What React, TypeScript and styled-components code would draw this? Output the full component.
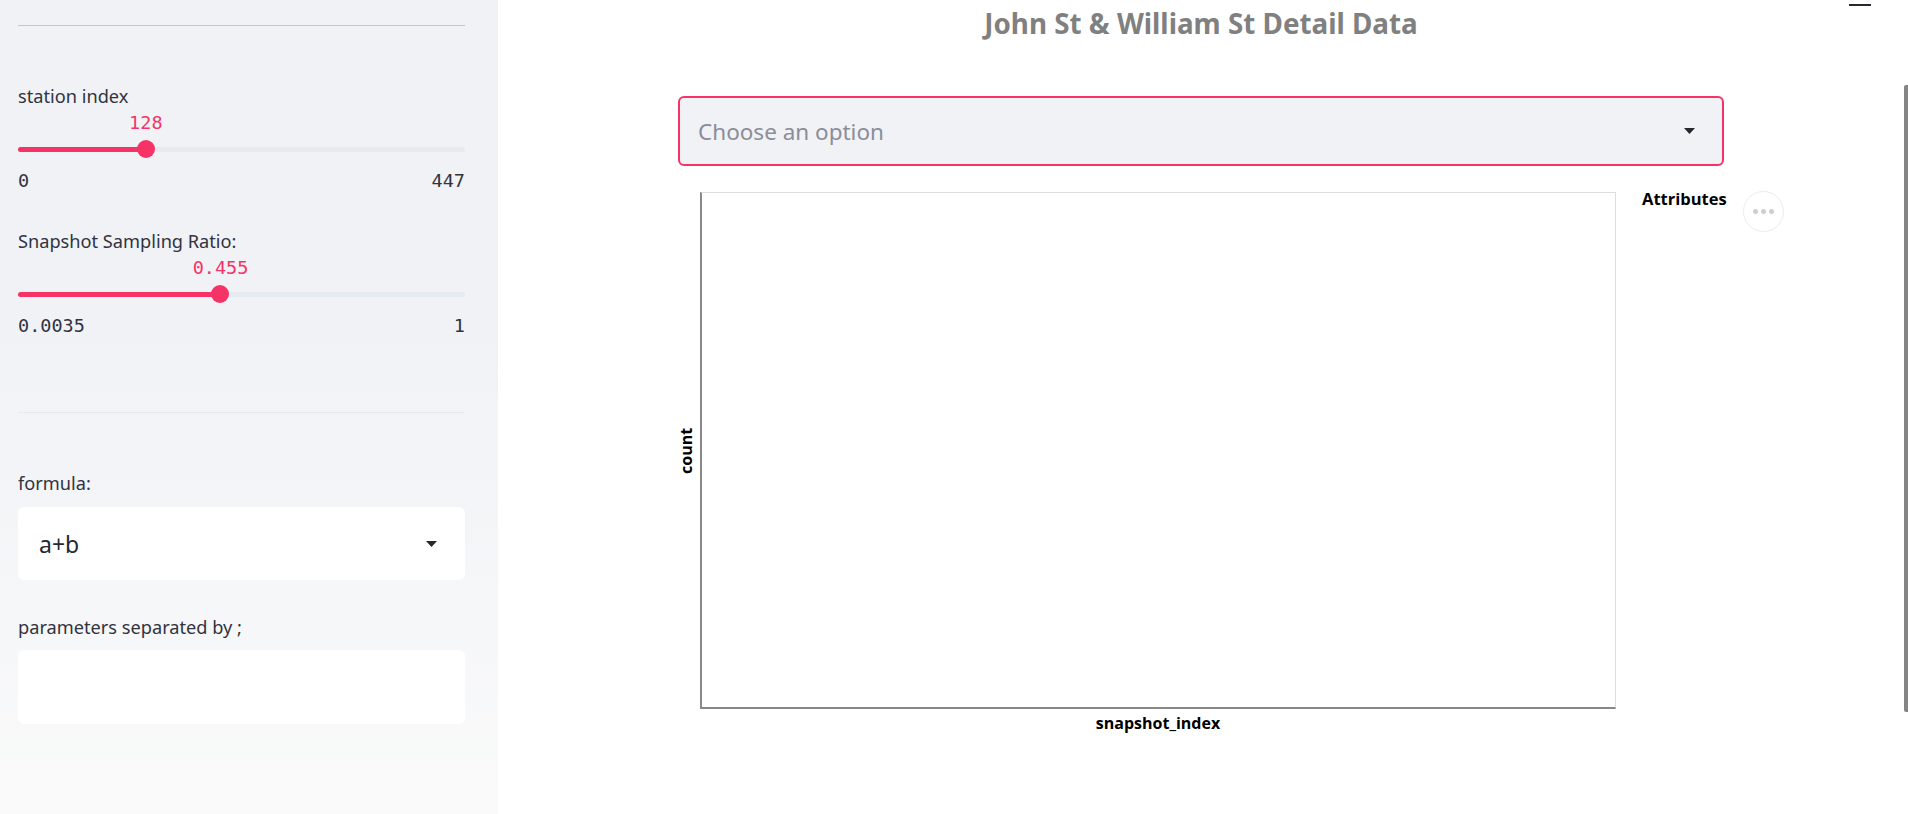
import React from "react";
import styled, { createGlobalStyle } from "styled-components";

const GlobalStyle = createGlobalStyle`
	html, body {
		margin: 0;
		padding: 0;
		height: 814px;
		overflow: hidden;
		background: #ffffff;
	}
	* {
		box-sizing: border-box;
	}
`;

const PINK = "#f63366";
const TEXT = "#31333f";

type SliderProps = {
	label: string;
	value: string;
	min: string;
	max: string;
	percent: number;
	first?: boolean;
};

const Slider = ({ label, value, min, max, percent, first }: SliderProps) => (
	<SliderBlock $first={first}>
		<Label>{label}</Label>
		<ValueRow>
			<ThumbValue style={{ left: `${percent}%` }}>{value}</ThumbValue>
		</ValueRow>
		<TrackRow>
			<Track>
				<TrackFill style={{ width: `${percent}%` }} />
				<Thumb style={{ left: `${percent}%` }} />
			</Track>
		</TrackRow>
		<MinMax>
			<span>{min}</span>
			<span>{max}</span>
		</MinMax>
	</SliderBlock>
);

const Caret = () => (
	<svg width="11" height="6" viewBox="0 0 11 6">
		<path d="M0 0 L11 0 L5.5 6 Z" fill="#262730" />
	</svg>
);

const App = () => {
	return (
		<>
			<GlobalStyle />
			<Layout>
				<Sidebar>
					<TopRule />
					<Slider label="station index" value="128" min="0" max="447" percent={28.6} first />
					<Slider label="Snapshot Sampling Ratio:" value="0.455" min="0.0035" max="1" percent={45.3} />
					<Divider />
					<FieldLabel>formula:</FieldLabel>
					<SideSelect>
						<span>a+b</span>
						<Caret />
					</SideSelect>
					<FieldLabel $gap={35}>parameters separated by ;</FieldLabel>
					<SideInput />
				</Sidebar>

				<Main>
					<MenuDash />
					<Content>
						<Title>John St &amp; William St Detail Data</Title>
						<MainSelect>
							<Placeholder>Choose an option</Placeholder>
							<Caret />
						</MainSelect>
						<ChartWrap>
							<ChartRow>
								<YTitle>count</YTitle>
								<PlotColumn>
									<Plot />
									<XTitle>snapshot_index</XTitle>
								</PlotColumn>
								<Legend>Attributes</Legend>
							</ChartRow>
							<ActionsButton>
								<Dot />
								<Dot />
								<Dot />
							</ActionsButton>
						</ChartWrap>
					</Content>
					<ScrollThumb />
				</Main>
			</Layout>
		</>
	);
};

const Layout = styled.div`
	display: flex;
	width: 1908px;
	height: 814px;
	font-family: "Noto Sans", "Open Sans", sans-serif;
	color: ${TEXT};
`;

const Sidebar = styled.aside`
	width: 498px;
	flex-shrink: 0;
	height: 814px;
	padding: 25px 33px 0 18px;
	background: linear-gradient(180deg, #f0f2f6 0%, #f0f2f6 40%, #fafafa 100%);
	display: flex;
	flex-direction: column;
`;

const TopRule = styled.div`
	height: 1px;
	background: #c4c6cc;
`;

const SliderBlock = styled.div<{ $first?: boolean }>`
	margin-top: ${(p) => (p.$first ? "58px" : "37px")};
	display: flex;
	flex-direction: column;
`;

const Label = styled.div`
	font-size: 18.2px;
	line-height: 24px;
	color: ${TEXT};
`;

const ValueRow = styled.div`
	position: relative;
	height: 22px;
	margin-top: 4px;
`;

const ThumbValue = styled.span`
	position: absolute;
	top: 0;
	transform: translateX(-50%);
	font-family: "DejaVu Sans Mono", "Liberation Mono", monospace;
	font-size: 18.5px;
	line-height: 22px;
	color: ${PINK};
	white-space: nowrap;
`;

const TrackRow = styled.div`
	height: 20px;
	margin-top: 5px;
	display: flex;
	align-items: center;
`;

const Track = styled.div`
	position: relative;
	width: 100%;
	height: 5px;
	border-radius: 3px;
	background: #e6eaf1;
`;

const TrackFill = styled.div`
	height: 100%;
	border-radius: 3px;
	background: ${PINK};
`;

const Thumb = styled.div`
	position: absolute;
	top: 50%;
	width: 18px;
	height: 18px;
	border-radius: 50%;
	background: ${PINK};
	transform: translate(-50%, -50%);
`;

const MinMax = styled.div`
	display: flex;
	justify-content: space-between;
	margin-top: 11px;
	font-family: "DejaVu Sans Mono", "Liberation Mono", monospace;
	font-size: 18.5px;
	line-height: 22px;
	color: ${TEXT};
`;

const Divider = styled.div`
	height: 1px;
	margin-top: 75px;
	background: #e8e9ec;
`;

const FieldLabel = styled.div<{ $gap?: number }>`
	margin-top: ${(p) => p.$gap ?? 58}px;
	font-size: 18.2px;
	line-height: 24px;
	color: ${TEXT};
`;

const SideSelect = styled.div`
	margin-top: 12px;
	height: 73px;
	background: #ffffff;
	border-radius: 6px;
	display: flex;
	align-items: center;
	justify-content: space-between;
	padding: 0 28px 0 21px;
	font-size: 23px;
	color: #262730;
`;

const SideInput = styled.div`
	margin-top: 11px;
	height: 74px;
	background: #ffffff;
	border-radius: 6px;
`;

const Main = styled.main`
	position: relative;
	flex: 1;
	height: 814px;
	background: #ffffff;
`;

const MenuDash = styled.div`
	position: absolute;
	top: 4px;
	left: 1351px;
	width: 22px;
	height: 2px;
	background: #262730;
`;

const ScrollThumb = styled.div`
	position: absolute;
	top: 85px;
	right: 0;
	width: 4px;
	height: 627px;
	border-radius: 2px 0 0 2px;
	background: #858585;
`;

const Content = styled.div`
	width: 1046px;
	margin: 0 auto;
	padding-top: 4px;
	display: flex;
	flex-direction: column;
	transform: translateX(-2px);
`;

const Title = styled.h3`
	margin: 0;
	text-align: center;
	font-size: 27.8px;
	line-height: 38px;
	font-weight: 700;
	color: #808080;
`;

const MainSelect = styled.div`
	margin-top: 54px;
	height: 70px;
	border: 2.5px solid ${PINK};
	border-radius: 6px;
	background: #f0f2f6;
	display: flex;
	align-items: center;
	justify-content: space-between;
	padding: 0 27px 0 18px;
`;

const Placeholder = styled.span`
	font-size: 22.5px;
	color: #8b8d98;
`;

const ChartWrap = styled.div`
	position: relative;
	margin-top: 26px;
`;

const ChartRow = styled.div`
	display: flex;
	align-items: flex-start;
	font-family: "Open Sans", "Noto Sans", sans-serif;
	color: #000000;
`;

const YTitle = styled.div`
	width: 22px;
	height: 517px;
	display: flex;
	align-items: center;
	justify-content: center;
	writing-mode: vertical-rl;
	transform: rotate(180deg);
	font-size: 16px;
	font-weight: 700;
	padding-left: 6px;
`;

const PlotColumn = styled.div`
	display: flex;
	flex-direction: column;
	align-items: center;
`;

const Plot = styled.div`
	width: 916px;
	height: 517px;
	border-top: 1px solid #dddddd;
	border-right: 1px solid #dddddd;
	border-left: 2px solid #888888;
	border-bottom: 2px solid #888888;
`;

const XTitle = styled.div`
	margin-top: 3px;
	font-size: 16px;
	line-height: 22px;
	font-weight: 700;
`;

const Legend = styled.div`
	margin-left: 26px;
	margin-top: -4px;
	font-size: 16.5px;
	line-height: 22px;
	font-weight: 700;
`;

const ActionsButton = styled.div`
	position: absolute;
	top: -1px;
	left: 1065px;
	width: 41px;
	height: 41px;
	border-radius: 50%;
	border: 1px solid #ececec;
	background: #ffffff;
	display: flex;
	align-items: center;
	justify-content: center;
	gap: 3px;
`;

const Dot = styled.span`
	width: 5px;
	height: 5px;
	border-radius: 50%;
	background: #cdcdcd;
`;

export default App;
